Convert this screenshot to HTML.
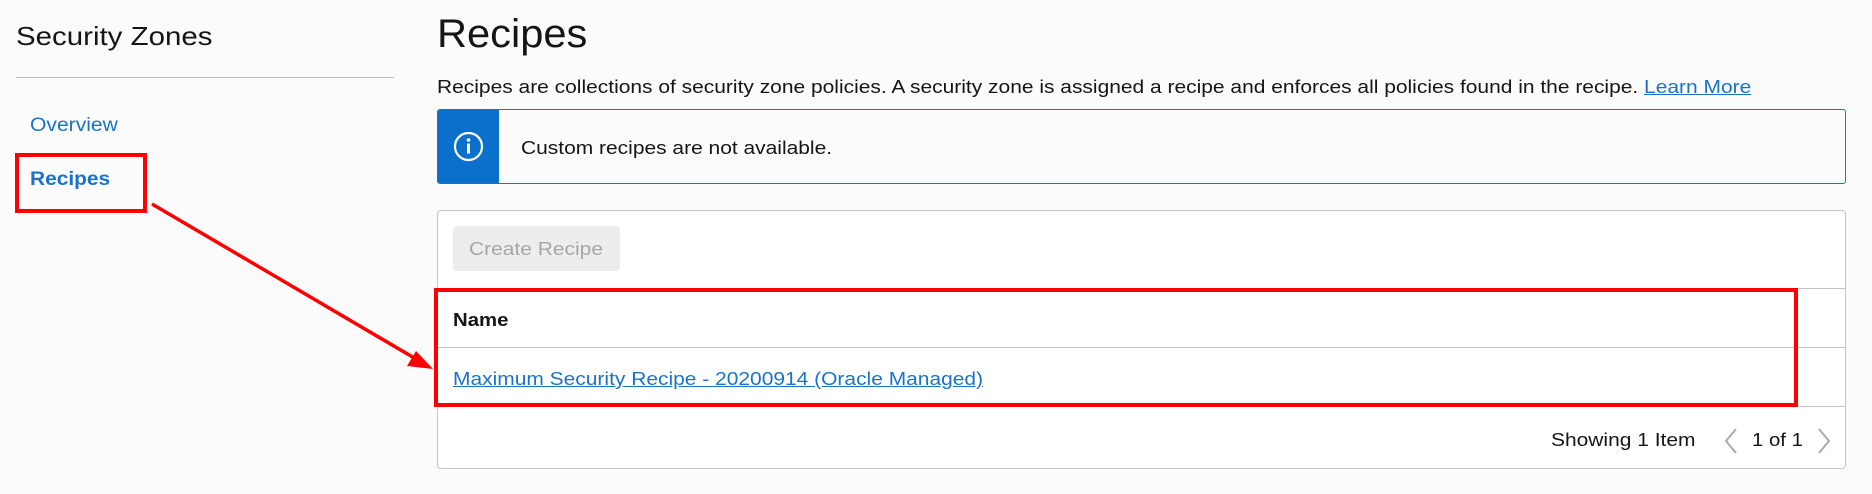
<!DOCTYPE html>
<html><head><meta charset="utf-8"><style>
*{margin:0;padding:0;box-sizing:border-box}
body{width:1872px;height:494px;background:#fbfbfb;font-family:"Liberation Sans",Arial,sans-serif;position:relative;overflow:hidden;color:#161513}
.a{position:absolute;white-space:nowrap}
.s{transform-origin:0 0;transform:scaleX(1.133)}
</style></head><body>
<div class="a s" style="left:16px;top:21px;font-size:26px;color:#161513">Security Zones</div>
<div class="a" style="left:16px;top:77px;width:378px;height:1px;background:#bcbcc4"></div>
<div class="a s" style="left:30px;top:115px;font-size:19px;color:#1a73c9;transform:scaleX(1.11)">Overview</div>
<div class="a s" style="left:30px;top:169px;font-size:19px;font-weight:bold;color:#1a73c9;transform:scaleX(1.1)">Recipes</div>
<div class="a" style="left:15px;top:153px;width:132px;height:60px;border:4px solid #f00"></div>

<div class="a s" style="left:437px;top:12px;font-size:40px;color:#161513;transform:scaleX(1.04)">Recipes</div>
<div class="a s" style="left:437px;top:76px;font-size:18.5px">Recipes are collections of security zone policies. A security zone is assigned a recipe and enforces all policies found in the recipe. <span style="color:#1a73c9;text-decoration:underline">Learn More</span></div>

<div class="a" style="left:437px;top:109px;width:1409px;height:75px;border:1px solid #1a73c9;border-radius:3px;background:#fbfbfb;overflow:hidden">
 <div style="position:absolute;left:0;top:0;width:61px;height:75px;background:#0b6fcc"></div>
 <svg style="position:absolute;left:15px;top:21px" width="31" height="31" viewBox="0 0 31 31"><circle cx="15.5" cy="15.5" r="13.5" fill="none" stroke="#fff" stroke-width="2.2"/><circle cx="15.5" cy="9" r="1.8" fill="#fff"/><rect x="14" y="12.5" width="3" height="10" fill="#fff"/></svg>
 <div class="a s" style="left:83px;top:27px;font-size:18.5px">Custom recipes are not available.</div>
</div>

<div class="a" style="left:437px;top:210px;width:1409px;height:259px;border:1px solid #c4c4c4;border-radius:4px;background:#fff"></div>
<div class="a" style="left:453px;top:226px;width:167px;height:45px;background:#ededed;border-radius:4px"></div>
<div class="a s" style="left:469px;top:238px;color:#a6a6a6;font-size:18.5px">Create Recipe</div>
<div class="a" style="left:438px;top:288px;width:1407px;height:1px;background:#c4c4c4"></div>
<div class="a" style="left:438px;top:347px;width:1407px;height:1px;background:#c4c4c4"></div>
<div class="a" style="left:438px;top:406px;width:1407px;height:1px;background:#c4c4c4"></div>
<div class="a s" style="left:453px;top:309px;font-size:18.5px;font-weight:bold;transform:scaleX(1.1)">Name</div>
<div class="a s" style="left:453px;top:368px;font-size:18.5px;color:#1a73c9;text-decoration:underline">Maximum Security Recipe - 20200914 (Oracle Managed)</div>
<div class="a" style="left:434px;top:288px;width:1364px;height:119px;border:4px solid #f00"></div>

<div class="a s" style="left:1551px;top:429px;font-size:18.5px">Showing 1 Item</div>
<svg class="a" style="left:1722px;top:427px" width="18" height="28" viewBox="0 0 18 28"><path d="M14 2 L4 14 L14 26" fill="none" stroke="#aaa" stroke-width="2"/></svg>
<div class="a s" style="left:1752px;top:429px;font-size:18.5px;transform:scaleX(1.1)">1 of 1</div>
<svg class="a" style="left:1815px;top:427px" width="18" height="28" viewBox="0 0 18 28"><path d="M4 2 L14 14 L4 26" fill="none" stroke="#aaa" stroke-width="2"/></svg>

<svg class="a" style="left:0;top:0" width="1872" height="494"><line x1="152" y1="204" x2="416" y2="359" stroke="#f00" stroke-width="3.5"/><polygon points="433,369 407,366 416,351" fill="#f00"/></svg>
</body></html>
